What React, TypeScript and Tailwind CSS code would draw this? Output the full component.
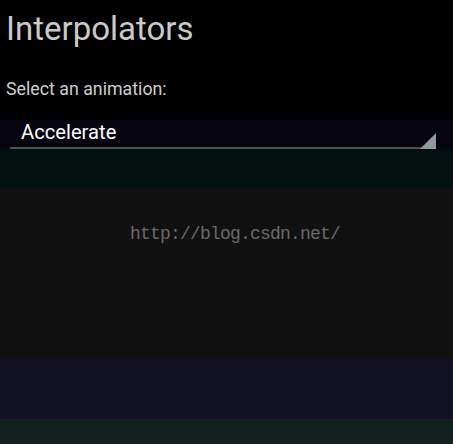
import React from 'react';

export default function App() {
    return (
        <div
            className="relative w-[453px] h-[444px] flex flex-col bg-black overflow-hidden"
            style={{ fontFamily: 'Roboto, "Noto Sans", sans-serif' }}
        >
            {/* Header */}
            <div className="h-[120px] flex flex-col px-[6px]">
                <h1 className="mt-[9px] text-[33px] leading-[40px] text-[#c9c9c9] font-normal">Interpolators</h1>
                <p className="mt-[29px] text-[17.8px] leading-[22px] text-[#cfcfcf]">Select an animation:</p>
            </div>

            {/* Spinner */}
            <div className="h-[29px] bg-[#05040f] relative flex items-start">
                <span className="ml-[21px] mt-[0px] text-[20.2px] leading-[24px] text-white">Accelerate</span>
                <div className="absolute left-[10px] right-[17px] bottom-0 h-[2px] bg-[#505050]" />
                <svg className="absolute right-[17px] bottom-0" width="16" height="16" viewBox="0 0 16 16">
                    <polygon points="16,0 16,16 0,16" fill="#8d9b9b" />
                </svg>
            </div>

            {/* Bands */}
            <div className="h-[40px] bg-[#040f10]" />
            <div className="h-[169px] bg-[#111111] flex pl-[130px]">
                <span
                    className="mt-[34px] text-[18px] leading-[22px] tracking-[-0.8px] text-[#6a6a6a]"
                    style={{ fontFamily: '"Liberation Mono", monospace' }}
                >
                    http://blog.csdn.net/
                </span>
            </div>
            <div className="h-[61px] bg-[#121023]" />
            <div className="flex-1 bg-[#111f1f]" />
        </div>
    );
}
